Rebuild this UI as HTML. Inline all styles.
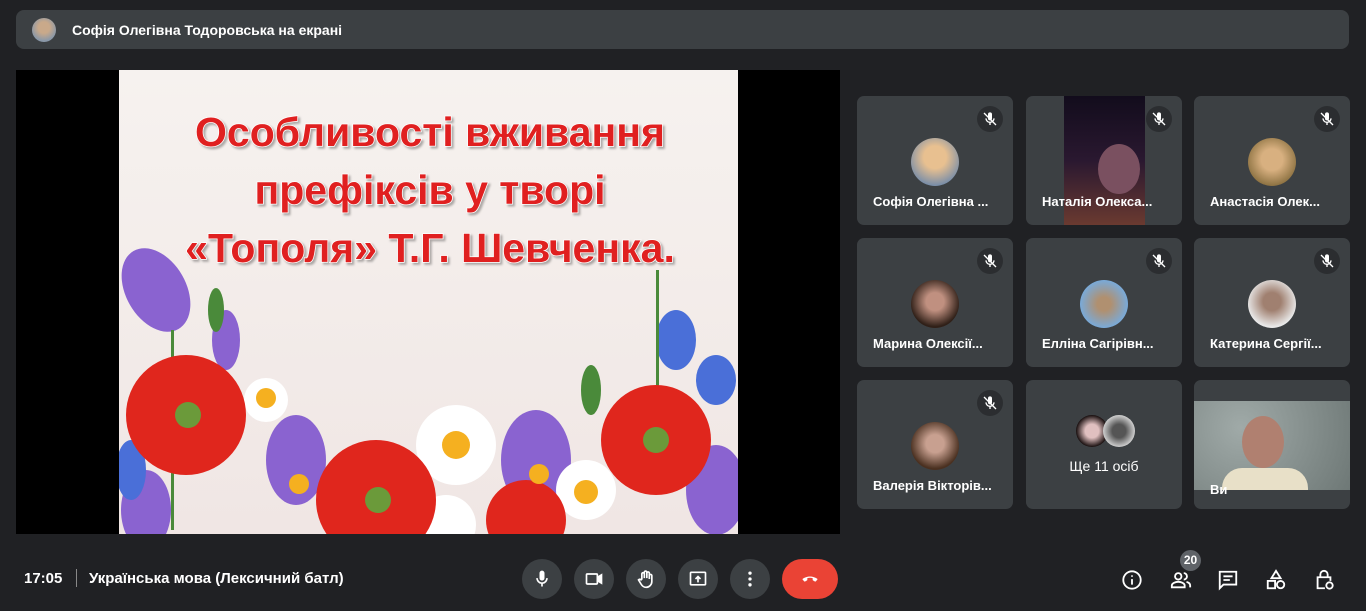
<!DOCTYPE html>
<html><head><meta charset="utf-8"><style>
*{margin:0;padding:0;box-sizing:border-box}
body{width:1366px;height:611px;background:#202124;font-family:"Liberation Sans",sans-serif;position:relative;overflow:hidden;color:#fff}
.top{position:absolute;left:16px;top:10px;width:1333px;height:39px;background:#3c4043;border-radius:8px}
.top .av{position:absolute;left:16px;top:8px;width:24px;height:24px;border-radius:50%;background:radial-gradient(circle at 50% 40%,#c9a98a 30%,#8a98a8 70%)}
.top span{position:absolute;left:56px;top:12px;font-size:14px;font-weight:bold}
.stage{position:absolute;left:16px;top:70px;width:824px;height:464px;background:#000}
.tile{position:absolute;width:156px;height:129px;background:#3c4043;border-radius:7px;overflow:hidden}
.tile .nm{position:absolute;left:16px;bottom:16px;font-size:13px;font-weight:bold;white-space:nowrap}
.tile .av{position:absolute;left:54px;top:42px;width:48px;height:48px;border-radius:50%}
.mute{position:absolute;right:10px;top:10px;width:26px;height:26px;border-radius:50%;background:#2b2d30}
.mute svg{position:absolute;left:5px;top:5px}
.btn{position:absolute;top:559px;width:40px;height:40px;border-radius:50%;background:#3c4043}
.btn svg{position:absolute;left:10px;top:10px}
.ri svg{position:absolute;top:569px}
</style></head><body>
<div class="top"><div class="av"></div><span>Софія Олегівна Тодоровська на екрані</span></div>
<div class="stage">
<svg width="824" height="464" style="position:absolute;left:0;top:0">
<defs><linearGradient id="bg" x1="0" y1="0" x2="0" y2="1"><stop offset="0" stop-color="#f6f2ef"/><stop offset="1" stop-color="#f0e6e4"/></linearGradient>
<clipPath id="c"><rect x="103" y="0" width="619" height="464"/></clipPath></defs>
<g clip-path="url(#c)">
<rect x="103" y="0" width="619" height="464" fill="url(#bg)"/>
<g fill="#8a63d0"><ellipse cx="140" cy="220" rx="30" ry="45" transform="rotate(-30 140 220)"/><ellipse cx="210" cy="270" rx="14" ry="30"/><ellipse cx="280" cy="390" rx="30" ry="45"/><ellipse cx="520" cy="390" rx="35" ry="50"/><ellipse cx="700" cy="420" rx="30" ry="45"/><ellipse cx="130" cy="440" rx="25" ry="40"/></g>
<g fill="#4a6fd8"><ellipse cx="660" cy="270" rx="20" ry="30"/><ellipse cx="700" cy="310" rx="20" ry="25"/><ellipse cx="115" cy="400" rx="15" ry="30"/></g>
<g fill="#4a8a3a"><rect x="640" y="200" width="3" height="160"/><rect x="155" y="260" width="3" height="200"/><ellipse cx="200" cy="240" rx="8" ry="22"/><ellipse cx="575" cy="320" rx="10" ry="25"/></g>
<g fill="#fff"><circle cx="440" cy="375" r="40"/><circle cx="250" cy="330" r="22"/><circle cx="570" cy="420" r="30"/><circle cx="430" cy="455" r="30"/></g>
<g fill="#e0261d"><circle cx="170" cy="345" r="60"/><circle cx="360" cy="430" r="60"/><circle cx="640" cy="370" r="55"/><circle cx="510" cy="450" r="40"/></g>
<g fill="#6b9a3a"><circle cx="172" cy="345" r="13"/><circle cx="362" cy="430" r="13"/><circle cx="640" cy="370" r="13"/></g>
<g fill="#f5b020"><circle cx="440" cy="375" r="14"/><circle cx="250" cy="328" r="10"/><circle cx="570" cy="422" r="12"/><circle cx="283" cy="414" r="10"/><circle cx="523" cy="404" r="10"/></g>
<g font-family="Liberation Sans,sans-serif" font-weight="bold" font-size="41" fill="#e02020" stroke="#fff" stroke-width="1.5" text-anchor="middle" paint-order="stroke" style="filter:drop-shadow(2px 2px 1px rgba(0,0,0,.3))">
<text x="414" y="76">Особливості вживання</text>
<text x="414" y="134">префіксів у творі</text>
<text x="414" y="192">«Тополя» Т.Г. Шевченка.</text></g>
</g>
</svg></div>

<div class="tile" style="left:857px;top:96px"><div class="av" style="background:radial-gradient(circle at 50% 40%,#e8c090 30%,#7a8ea8 75%)"></div><div class="mute"><svg width="16" height="16" viewBox="0 0 24 24" fill="#fff"><path d="M12 14a3 3 0 0 0 3-3V5a3 3 0 0 0-6 0v6a3 3 0 0 0 3 3zm5-3a5 5 0 0 1-10 0H5a7 7 0 0 0 6 6.9V21h2v-3.1A7 7 0 0 0 19 11z"/><path d="M3 3l18 18" stroke="#fff" stroke-width="2"/></svg></div><div class="nm">Софія Олегівна ...</div></div>
<div class="tile" style="left:1026px;top:96px"><div style="position:absolute;left:38px;top:0;width:81px;height:129px;background:linear-gradient(#120c1c,#2a1830 50%,#6a3a30)"></div><div style="position:absolute;left:72px;top:48px;width:42px;height:50px;border-radius:50%;background:#7a5060"></div><div class="mute"><svg width="16" height="16" viewBox="0 0 24 24" fill="#fff"><path d="M12 14a3 3 0 0 0 3-3V5a3 3 0 0 0-6 0v6a3 3 0 0 0 3 3zm5-3a5 5 0 0 1-10 0H5a7 7 0 0 0 6 6.9V21h2v-3.1A7 7 0 0 0 19 11z"/><path d="M3 3l18 18" stroke="#fff" stroke-width="2"/></svg></div><div class="nm">Наталія Олекса...</div></div>
<div class="tile" style="left:1194px;top:96px"><div class="av" style="background:radial-gradient(circle at 50% 45%,#d8b080 30%,#8a7040 75%)"></div><div class="mute"><svg width="16" height="16" viewBox="0 0 24 24" fill="#fff"><path d="M12 14a3 3 0 0 0 3-3V5a3 3 0 0 0-6 0v6a3 3 0 0 0 3 3zm5-3a5 5 0 0 1-10 0H5a7 7 0 0 0 6 6.9V21h2v-3.1A7 7 0 0 0 19 11z"/><path d="M3 3l18 18" stroke="#fff" stroke-width="2"/></svg></div><div class="nm">Анастасія Олек...</div></div>

<div class="tile" style="left:857px;top:238px"><div class="av" style="background:radial-gradient(circle at 50% 45%,#c09080 25%,#302018 70%)"></div><div class="mute"><svg width="16" height="16" viewBox="0 0 24 24" fill="#fff"><path d="M12 14a3 3 0 0 0 3-3V5a3 3 0 0 0-6 0v6a3 3 0 0 0 3 3zm5-3a5 5 0 0 1-10 0H5a7 7 0 0 0 6 6.9V21h2v-3.1A7 7 0 0 0 19 11z"/><path d="M3 3l18 18" stroke="#fff" stroke-width="2"/></svg></div><div class="nm">Марина Олексії...</div></div>
<div class="tile" style="left:1026px;top:238px"><div class="av" style="background:radial-gradient(circle at 50% 50%,#b09070 20%,#7aaad8 70%)"></div><div class="mute"><svg width="16" height="16" viewBox="0 0 24 24" fill="#fff"><path d="M12 14a3 3 0 0 0 3-3V5a3 3 0 0 0-6 0v6a3 3 0 0 0 3 3zm5-3a5 5 0 0 1-10 0H5a7 7 0 0 0 6 6.9V21h2v-3.1A7 7 0 0 0 19 11z"/><path d="M3 3l18 18" stroke="#fff" stroke-width="2"/></svg></div><div class="nm">Елліна Сагірівн...</div></div>
<div class="tile" style="left:1194px;top:238px"><div class="av" style="background:radial-gradient(circle at 50% 45%,#a08070 25%,#e8e8e8 70%)"></div><div class="mute"><svg width="16" height="16" viewBox="0 0 24 24" fill="#fff"><path d="M12 14a3 3 0 0 0 3-3V5a3 3 0 0 0-6 0v6a3 3 0 0 0 3 3zm5-3a5 5 0 0 1-10 0H5a7 7 0 0 0 6 6.9V21h2v-3.1A7 7 0 0 0 19 11z"/><path d="M3 3l18 18" stroke="#fff" stroke-width="2"/></svg></div><div class="nm">Катерина Сергії...</div></div>

<div class="tile" style="left:857px;top:380px"><div class="av" style="background:radial-gradient(circle at 50% 45%,#c8a090 25%,#4a3020 70%)"></div><div class="mute"><svg width="16" height="16" viewBox="0 0 24 24" fill="#fff"><path d="M12 14a3 3 0 0 0 3-3V5a3 3 0 0 0-6 0v6a3 3 0 0 0 3 3zm5-3a5 5 0 0 1-10 0H5a7 7 0 0 0 6 6.9V21h2v-3.1A7 7 0 0 0 19 11z"/><path d="M3 3l18 18" stroke="#fff" stroke-width="2"/></svg></div><div class="nm">Валерія Вікторів...</div></div>
<div class="tile" style="left:1026px;top:380px"><div style="position:absolute;left:50px;top:35px;width:32px;height:32px;border-radius:50%;background:radial-gradient(#e0c0c0 30%,#1a1010 70%)"></div><div style="position:absolute;left:77px;top:35px;width:32px;height:32px;border-radius:50%;background:radial-gradient(#555 30%,#ddd 75%)"></div><div style="position:absolute;left:0;width:156px;top:78px;text-align:center;font-size:14px">Ще 11 осіб</div></div>
<div class="tile" style="left:1194px;top:380px"><div style="position:absolute;left:0;top:21px;width:156px;height:89px;background:radial-gradient(circle at 30% 30%,#a0aaa8,#6e7876)"></div><div style="position:absolute;left:48px;top:36px;width:42px;height:52px;border-radius:50%;background:#b08070"></div><div style="position:absolute;left:28px;top:88px;width:86px;height:22px;border-radius:20px 20px 0 0;background:#e8e0c8"></div><div style="position:absolute;left:16px;top:102px;font-size:13px;font-weight:bold">Ви</div></div>

<div style="position:absolute;left:24px;top:570px;font-size:15px;font-weight:bold">17:05</div>
<div style="position:absolute;left:76px;top:569px;width:1px;height:18px;background:#888"></div>
<div style="position:absolute;left:89px;top:570px;font-size:15px;font-weight:bold">Українська мова (Лексичний батл)</div>

<div class="btn" style="left:522px"><svg width="20" height="20" viewBox="0 0 24 24" fill="#fff"><path d="M12 14a3 3 0 0 0 3-3V5a3 3 0 0 0-6 0v6a3 3 0 0 0 3 3zm5-3a5 5 0 0 1-10 0H5a7 7 0 0 0 6 6.9V21h2v-3.1A7 7 0 0 0 19 11z"/></svg></div>
<div class="btn" style="left:574px"><svg width="20" height="20" viewBox="0 0 24 24" fill="none" stroke="#fff" stroke-width="2"><rect x="3" y="6" width="13" height="12" rx="1"/><path d="M16 10l5-3v10l-5-3" fill="#fff"/></svg></div>
<div class="btn" style="left:626px"><svg width="20" height="20" viewBox="0 0 24 24" fill="none" stroke="#fff" stroke-width="2"><path d="M7 12V6a1.5 1.5 0 0 1 3 0v5V4a1.5 1.5 0 0 1 3 0v7V5a1.5 1.5 0 0 1 3 0v7V8a1.5 1.5 0 0 1 3 0v7a7 7 0 0 1-7 7c-3 0-4.5-1.5-6-4l-3-5c1-1 2-1 3 0z"/></svg></div>
<div class="btn" style="left:678px"><svg width="20" height="20" viewBox="0 0 24 24" fill="none" stroke="#fff" stroke-width="2"><rect x="3" y="4" width="18" height="15" rx="1"/><path d="M12 16V9M9 12l3-3 3 3" /></svg></div>
<div class="btn" style="left:730px"><svg width="20" height="20" viewBox="0 0 24 24" fill="#fff"><circle cx="12" cy="5" r="2"/><circle cx="12" cy="12" r="2"/><circle cx="12" cy="19" r="2"/></svg></div>
<div class="btn" style="left:782px;width:56px;border-radius:20px;background:#ea4335"><svg width="24" height="20" viewBox="0 0 24 24" fill="#fff" style="left:16px"><path d="M12 9c-3 0-6 1-8.5 2.5-.5.3-.6 1-.2 1.4l1.8 1.9c.3.3.9.4 1.3.1l2-1.3c.3-.2.4-.5.4-.9V11c2-.6 4.4-.6 6.4 0v1.7c0 .4.1.7.4.9l2 1.3c.4.3 1 .2 1.3-.1l1.8-1.9c.4-.4.3-1.1-.2-1.4C18 10 15 9 12 9z"/></svg></div>

<div class="ri">
<svg style="left:1121px" width="22" height="22" viewBox="0 0 24 24" fill="none" stroke="#fff" stroke-width="2"><circle cx="12" cy="12" r="9.5"/><path d="M12 11v6M12 7v1.5"/></svg>
<svg style="left:1169px" width="24" height="22" viewBox="0 0 24 24" fill="none" stroke="#fff" stroke-width="2"><circle cx="9" cy="8" r="3.5"/><path d="M2 20v-2c0-2.5 4-4 7-4s7 1.5 7 4v2zM15 4.5a3.5 3.5 0 0 1 0 7M18 14c2 .5 4 1.8 4 4v2"/></svg>
<svg style="left:1217px" width="22" height="22" viewBox="0 0 24 24" fill="none" stroke="#fff" stroke-width="2"><path d="M3 3h18v14H7l-4 4z"/><path d="M7 8h10M7 12h7"/></svg>
<svg style="left:1265px" width="22" height="22" viewBox="0 0 24 24" fill="none" stroke="#fff" stroke-width="2"><path d="M12 2l5 8H7z"/><circle cx="17" cy="17" r="4"/><rect x="3" y="13" width="8" height="8"/></svg>
<svg style="left:1313px" width="22" height="22" viewBox="0 0 24 24" fill="none" stroke="#fff" stroke-width="2"><path d="M8 9V6a4 4 0 0 1 8 0v3"/><path d="M13 21H5V9h14v4"/><circle cx="18" cy="18" r="3.5"/></svg>
</div>
<div style="position:absolute;left:1180px;top:550px;width:21px;height:21px;border-radius:50%;background:#5f6368;font-size:12px;font-weight:bold;text-align:center;line-height:21px">20</div>
</body></html>
